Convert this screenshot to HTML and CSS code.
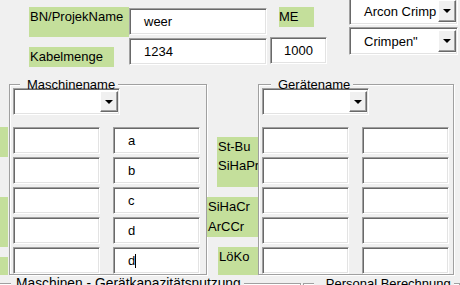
FILE: index.html
```
<!DOCTYPE html>
<html lang="de">
<head>
    <meta charset="UTF-8">
    <title>Kabel Kalkulation</title>
    <link rel="stylesheet" href="styles.css">
</head>
<body>

    <!-- Kopfbereich: Projekt, Menge, Prozess -->
    <div class="top">
        <div class="col col-labels">
            <div class="lbl lbl-bn">BN/ProjekName</div>
            <div class="lbl lbl-kabel">Kabelmenge</div>
        </div>
        <div class="col col-fields">
            <div class="box field">weer</div>
            <div class="box field field-2">1234</div>
        </div>
        <div class="col col-unit">
            <div class="lbl lbl-me">ME</div>
            <div class="box unit">1000</div>
        </div>
        <div class="col col-combo">
            <div class="box combo combo-top"><span class="combo-text">Arcon Crimp</span><span class="drop"></span></div>
            <div class="box combo combo-2"><span class="combo-text">Crimpen"</span><span class="drop"></span></div>
        </div>
    </div>

    <!-- Maschinen und Geräte -->
    <div class="middle">
        <div class="stubs">
            <div class="lbl stub stub-1"></div>
            <div class="lbl stub stub-2"></div>
            <div class="lbl stub stub-3"></div>
        </div>

        <fieldset class="group group-m">
            <legend>Maschinename</legend>
            <div class="box combo combo-group"><span class="combo-text"></span><span class="drop"></span></div>
            <div class="grid">
                <div class="box cell"></div><div class="box cell">a</div>
                <div class="box cell"></div><div class="box cell">b</div>
                <div class="box cell"></div><div class="box cell">c</div>
                <div class="box cell"></div><div class="box cell">d</div>
                <div class="box cell"></div><div class="box cell">d<span class="caret"></span></div>
            </div>
        </fieldset>

        <div class="mid-labels">
            <div class="lbl lbl-stbu">St-Bu<br>SiHaPr</div>
            <div class="lbl lbl-siha">SiHaCr<br>ArCCr</div>
            <div class="lbl lbl-loko">LöKo</div>
        </div>

        <fieldset class="group group-g">
            <legend>Gerätename</legend>
            <div class="box combo combo-group"><span class="combo-text"></span><span class="drop"></span></div>
            <div class="grid">
                <div class="box cell"></div><div class="box cell"></div>
                <div class="box cell"></div><div class="box cell"></div>
                <div class="box cell"></div><div class="box cell"></div>
                <div class="box cell"></div><div class="box cell"></div>
                <div class="box cell"></div><div class="box cell"></div>
            </div>
        </fieldset>
    </div>

    <!-- Auswertung -->
    <div class="bottom">
        <fieldset class="group group-cap">
            <legend>Maschinen - Gerätkapazitätsnutzung</legend>
        </fieldset>
        <fieldset class="group group-pers">
            <legend>Personal Berechnung</legend>
        </fieldset>
    </div>

</body>
</html>
```

FILE: styles.css
```
html, body {
    margin: 0;
    overflow: hidden;
}
body {
    width: 460px;
    height: 285px;
    background-color: #f0f0f0;
    font-family: "Liberation Sans", Arial, sans-serif;
    font-size: 13px;
    color: #000;
}
.top {
    display: flex;
    height: 81px;
}
.col {
    display: flex;
    flex-direction: column;
}
.lbl {
    background-color: #c4df9b;
    line-height: 19px;
    padding-left: 1px;
    box-sizing: border-box;
}
.box {
    background-color: #fff;
    box-sizing: border-box;
    border: 1px solid;
    border-color: #a0a0a0 #fff #fff #a0a0a0;
    box-shadow: inset 1px 1px 0 #696969, inset -1px -1px 0 #e3e3e3;
    display: flex;
    align-items: center;
    padding-left: 14px;
}

/* Kopfbereich */
.col-labels {
    margin-left: 29px;
    width: 100px;
}
.lbl-bn {
    margin-top: 7px;
    height: 30px;
    width: 100px;
}
.lbl-kabel {
    margin-top: 10px;
    height: 20px;
    width: 85px;
}
.col-fields {
    width: 138px;
}
.field {
    margin-top: 8px;
    height: 27px;
}
.field-2 {
    margin-top: 3px;
}
.col-unit {
    margin-left: 3px;
    width: 57px;
}
.lbl-me {
    margin-top: 7px;
    margin-left: 9px;
    width: 35px;
    height: 20px;
    padding-left: 0;
}
.unit {
    margin-top: 10px;
    height: 27px;
    padding-left: 0;
    justify-content: center;
}
.col-combo {
    margin-left: 22px;
    width: 109px;
}
.combo {
    padding: 2px 1px 2px 0;
    align-items: stretch;
}
.combo-text {
    flex: 1;
    display: flex;
    align-items: center;
    padding-left: 14px;
}
.drop {
    width: 18px;
    box-sizing: border-box;
    background-color: #f0f0f0;
    border: 1px solid;
    border-color: #fff #696969 #696969 #fff;
    box-shadow: inset -1px -1px 0 #a0a0a0;
    display: flex;
    align-items: center;
    justify-content: center;
}
.drop::after {
    content: "";
    border-left: 4px solid transparent;
    border-right: 4px solid transparent;
    border-top: 4px solid #000;
}
.combo-top {
    margin-top: -3px;
    height: 28px;
}
.combo-2 {
    margin-top: 2px;
    height: 28px;
}

/* Mittelteil */
.middle {
    display: flex;
    align-items: flex-start;
}
.stubs {
    width: 8px;
    margin-right: 1px;
    display: flex;
    flex-direction: column;
}
.stub-1 {
    margin-top: 46px;
    height: 30px;
}
.stub-2 {
    margin-top: 40px;
    height: 50px;
}
.stub-3 {
    margin-top: 10px;
    height: 18px;
}
.group {
    margin: 0;
    min-width: 0;
    border: 1px solid #a0a0a0;
    box-shadow: inset 1px 1px 0 #fff, 1px 1px 0 #fff;
    padding: 0 7px 0 3px;
}
.group legend {
    line-height: 7px;
    padding: 0 3px 0 7px;
    margin-left: 7px;
    background-color: #f0f0f0;
    white-space: nowrap;
}
.group-m {
    width: 198px;
    box-sizing: border-box;
}
.group-g {
    width: 196px;
    box-sizing: border-box;
    padding-right: 4px;
}
.group-g legend {
    margin-left: 9px;
}
.combo-group {
    width: 107px;
    height: 27px;
}
.grid {
    display: grid;
    grid-template-columns: 87px 87px;
    grid-auto-rows: 27px;
    column-gap: 13px;
    row-gap: 3px;
    margin-top: 12px;
}
.caret {
    display: inline-block;
    width: 1px;
    height: 14px;
    background-color: #000;
    vertical-align: -4px;
}
.mid-labels {
    width: 51px;
    display: flex;
    flex-direction: column;
    align-items: flex-start;
}
.lbl-stbu {
    margin-top: 56px;
    margin-left: 10px;
    width: 41px;
    height: 50px;
}
.lbl-siha {
    margin-top: 10px;
    width: 51px;
    height: 40px;
    line-height: 20px;
}
.lbl-loko {
    margin-top: 10px;
    margin-left: 11px;
    width: 40px;
    height: 28px;
}

/* Auswertung */
.bottom {
    display: flex;
    margin-top: 5px;
}
.group-cap {
    margin-left: -5px;
    width: 313px;
    height: 30px;
    padding: 0;
}
.group-cap legend {
    margin-left: 15px;
    padding: 0 3px 0 5px;
    font-size: 13.8px;
}
.group-pers {
    margin-left: 2px;
    width: 160px;
    height: 30px;
    padding: 0;
}
.group-pers legend {
    margin-left: 10px;
    padding: 0 3px 0 12px;
}
```
